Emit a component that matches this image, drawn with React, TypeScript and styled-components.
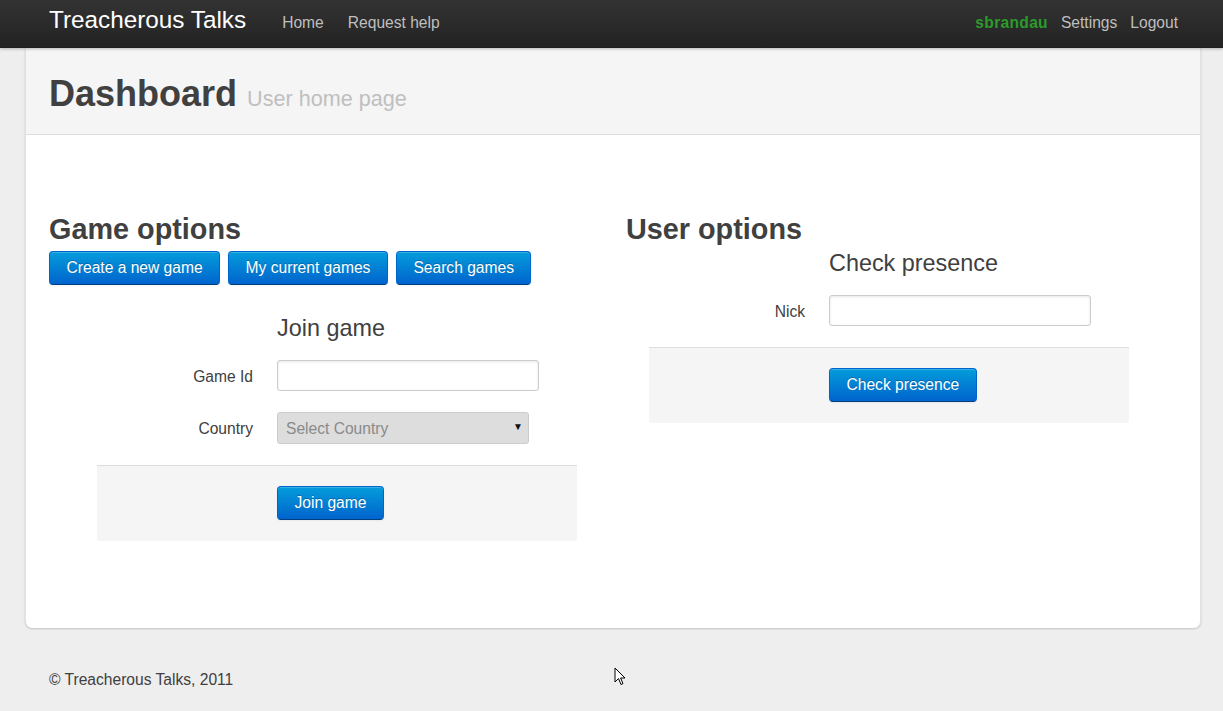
import React from "react";
import styled, { createGlobalStyle } from "styled-components";

const GlobalStyle = createGlobalStyle`
  html, body { margin: 0; padding: 0; }
  body {
    background: #eeeeee;
    font-family: "Liberation Sans", Arial, Helvetica, sans-serif;
    font-size: 15.6px;
    line-height: 21.6px;
    color: #404040;
  }
  * { box-sizing: border-box; }
`;

const Page = styled.div`
  position: relative;
  min-height: 711px;
`;

const TopBar = styled.header`
  height: 48px;
  background: linear-gradient(to bottom, #333333, #222222);
  box-shadow: 0 1px 3px rgba(0, 0, 0, 0.25), inset 0 -1px 0 rgba(0, 0, 0, 0.1);
  display: flex;
  align-items: flex-start;
  padding: 0 45px 0 49px;
  position: relative;
  z-index: 2;
`;

const Brand = styled.a`
  color: #ffffff;
  font-size: 24.3px;
  line-height: 24px;
  padding: 8px 24px 16px 0;
  text-decoration: none;
`;

const NavList = styled.nav`
  display: flex;
  align-items: flex-start;
`;

const NavLink = styled.a`
  color: #bfbfbf;
  font-size: 15.6px;
  line-height: 22.8px;
  padding: 12px 12px 13px;
  text-decoration: none;
`;

const UserNav = styled.div`
  margin-left: auto;
  display: flex;
  gap: 13px;
  padding-top: 12px;
  line-height: 22.8px;
  font-size: 15.6px;
`;

const UserName = styled.span`
  color: #2b9b2b;
  font-weight: bold;
  letter-spacing: 0.3px;
`;

const UserLink = styled.a`
  color: #bfbfbf;
  text-decoration: none;
`;

const ContentBox = styled.main`
  margin: 0 22px 0 25px;
  background: #ffffff;
  border-left: 1px solid #e2e2e2;
  border-right: 1px solid #e2e2e2;
  border-radius: 0 0 7px 7px;
  box-shadow: 0 1px 2px rgba(0, 0, 0, 0.18);
`;

const PageHeader = styled.div`
  background: #f5f5f5;
  padding: 24px 23px 19px;
  border-bottom: 1px solid #dddddd;
`;

const Title = styled.h1`
  margin: 0;
  font-size: 36px;
  line-height: 43px;
  font-weight: bold;
  color: #404040;
`;

const Subtitle = styled.small`
  font-size: 21.6px;
  line-height: 1;
  font-weight: normal;
  color: #bfbfbf;
`;

const Body = styled.div`
  padding: 73px 23px 87px;
  display: grid;
  grid-template-columns: 557px 1fr;
  column-gap: 20px;
  align-items: start;
`;

const Column = styled.section`
  display: flex;
  flex-direction: column;
`;

const SectionTitle = styled.h2`
  margin: 0;
  font-size: 28.8px;
  line-height: 42px;
  font-weight: bold;
  color: #404040;
`;

const ButtonRow = styled.div`
  display: flex;
  gap: 8px;
  margin-top: 1px;
`;

const PrimaryButton = styled.button`
  font-family: inherit;
  font-size: 15.6px;
  line-height: 19px;
  height: 34px;
  padding: 6px 16.5px 7px;
  color: #ffffff;
  background: linear-gradient(to bottom, #049cdb, #0064cd);
  border: 1px solid #0064cd;
  border-bottom-color: #003f81;
  border-radius: 4px;
  text-shadow: 0 -1px 0 rgba(0, 0, 0, 0.25);
  box-shadow: inset 0 1px 0 rgba(255, 255, 255, 0.2), 0 1px 2px rgba(0, 0, 0, 0.05);
  cursor: pointer;
  white-space: nowrap;
`;

const Fieldset = styled.form<{ $offset: number; $top: number }>`
  width: 480px;
  margin-left: ${(p) => p.$offset}px;
  margin-top: ${(p) => p.$top}px;
  display: flex;
  flex-direction: column;
`;

const Legend = styled.div`
  padding-left: 180px;
  font-size: 23.4px;
  line-height: 24px;
  color: #404040;
  margin-bottom: 20px;
`;

const FieldRow = styled.div`
  display: grid;
  grid-template-columns: 156px 1fr;
  column-gap: 24px;
  margin-bottom: 21px;
`;

const Label = styled.label`
  text-align: right;
  padding-top: 6px;
  font-size: 15.6px;
  line-height: 21.6px;
  color: #404040;
`;

const TextInput = styled.input`
  width: 262px;
  height: 31px;
  padding: 4px 6px;
  font-family: inherit;
  font-size: 15.6px;
  color: #808080;
  border: 1px solid #cccccc;
  border-radius: 3px;
  box-shadow: inset 0 1px 3px rgba(0, 0, 0, 0.1);
  background: #ffffff;
`;

const SelectWrap = styled.div`
  position: relative;
  width: 252px;
  height: 32px;
`;

const Select = styled.select`
  appearance: none;
  -webkit-appearance: none;
  width: 100%;
  height: 100%;
  padding: 0 8px;
  font-family: inherit;
  font-size: 15.6px;
  color: #8a8a8a;
  background: #dddddd;
  border: 1px solid #cccccc;
  border-radius: 3px;
`;

const SelectArrow = styled.span`
  position: absolute;
  right: 6px;
  top: 8px;
  font-size: 10px;
  line-height: 14px;
  color: #111111;
  pointer-events: none;
`;

const Actions = styled.div`
  background: #f5f5f5;
  border-top: 1px solid #dddddd;
  border-radius: 0 0 3px 3px;
  padding: 20px 24px 21px 180px;
  display: flex;
`;

const Footer = styled.footer`
  padding: 41px 49px 0;
  font-size: 15.6px;
  line-height: 21.6px;
  color: #404040;
`;

const Cursor = styled.svg`
  position: absolute;
  left: 614px;
  top: 667px;
`;

const countries = [
  "Select Country",
  "England",
  "France",
  "Germany",
  "Austria",
  "Italy",
  "Russia",
  "Turkey",
];

export default function App() {
  return (
    <Page>
      <GlobalStyle />
      <TopBar>
        <Brand href="#">Treacherous Talks</Brand>
        <NavList>
          <NavLink href="#">Home</NavLink>
          <NavLink href="#">Request help</NavLink>
        </NavList>
        <UserNav>
          <UserName>sbrandau</UserName>
          <UserLink href="#">Settings</UserLink>
          <UserLink href="#">Logout</UserLink>
        </UserNav>
      </TopBar>

      <ContentBox>
        <PageHeader>
          <Title>
            Dashboard <Subtitle>User home page</Subtitle>
          </Title>
        </PageHeader>

        <Body>
          <Column>
            <SectionTitle>Game options</SectionTitle>
            <ButtonRow>
              <PrimaryButton type="button">Create a new game</PrimaryButton>
              <PrimaryButton type="button">My current games</PrimaryButton>
              <PrimaryButton type="button">Search games</PrimaryButton>
            </ButtonRow>
            <Fieldset $offset={48} $top={31} onSubmit={(e) => e.preventDefault()}>
              <Legend>Join game</Legend>
              <FieldRow>
                <Label htmlFor="game-id">Game Id</Label>
                <TextInput id="game-id" type="text" />
              </FieldRow>
              <FieldRow>
                <Label htmlFor="country">Country</Label>
                <SelectWrap>
                  <Select id="country" defaultValue="Select Country">
                    {countries.map((c) => (
                      <option key={c} value={c}>
                        {c}
                      </option>
                    ))}
                  </Select>
                  <SelectArrow>▼</SelectArrow>
                </SelectWrap>
              </FieldRow>
              <Actions>
                <PrimaryButton type="submit">Join game</PrimaryButton>
              </Actions>
            </Fieldset>
          </Column>

          <Column>
            <SectionTitle>User options</SectionTitle>
            <Fieldset $offset={23} $top={1} onSubmit={(e) => e.preventDefault()}>
              <Legend>Check presence</Legend>
              <FieldRow>
                <Label htmlFor="nick">Nick</Label>
                <TextInput id="nick" type="text" />
              </FieldRow>
              <Actions>
                <PrimaryButton type="submit">Check presence</PrimaryButton>
              </Actions>
            </Fieldset>
          </Column>
        </Body>
      </ContentBox>

      <Footer>© Treacherous Talks, 2011</Footer>

      <Cursor width="12" height="20" viewBox="0 0 12 20">
        <path
          d="M1 1 L1 15 L4.5 11.5 L7 17.5 L9 16.6 L6.6 11 L11 11 Z"
          fill="#ffffff"
          stroke="#000000"
          strokeWidth="1"
          strokeLinejoin="miter"
        />
      </Cursor>
    </Page>
  );
}
